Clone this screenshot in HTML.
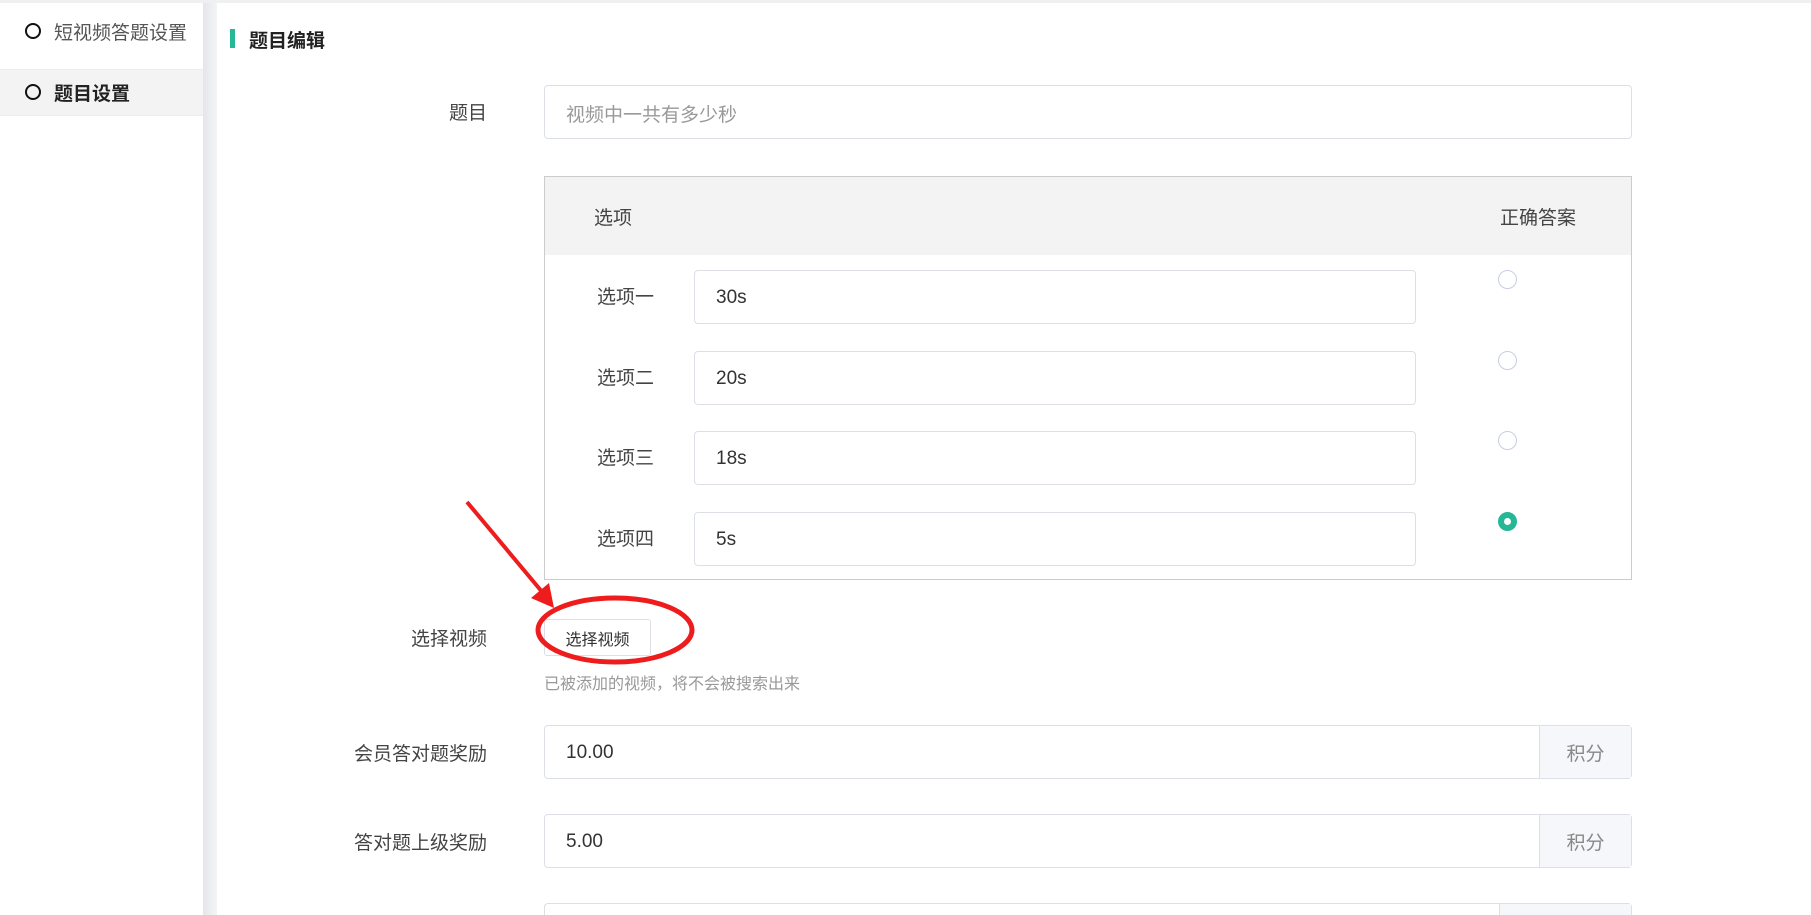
<!DOCTYPE html>
<html><head><meta charset="utf-8"><style>
*{box-sizing:border-box;margin:0;padding:0}
html,body{width:1811px;height:915px;overflow:hidden}
body{background:#fff;font-family:"Liberation Sans","Noto Sans CJK SC",sans-serif;color:#333;position:relative}
.a{position:absolute}
.topline{left:0;top:0;width:1811px;height:3px;background:#f0f0f0}
.gap{left:203px;top:3px;width:14px;height:912px;background:linear-gradient(90deg,#e4e6ea,#f3f4f6)}
.circ{width:16px;height:16px;border:2.5px solid #111;border-radius:50%}
.lbl{font-size:19px;color:#444;text-align:right;width:300px;left:187px}
.inp{border:1px solid #dcdfe6;border-radius:4px;background:#fff;font-size:19px;color:#333;padding-left:21px;padding-top:2px;display:flex;align-items:center}
.radio{width:19px;height:19px;border:1px solid #c8cde0;border-radius:50%;left:1498px}
.addon{background:#f5f7fa;border-left:1px solid #dcdfe6;color:#888;font-size:19px;display:flex;align-items:center;justify-content:center;top:0;bottom:0;right:0;position:absolute;width:92px}
</style></head><body>
<div class="a topline"></div>
<div class="a" style="left:0;top:3px;width:203px;height:912px;background:#fff;border-top-right-radius:18px"></div>
<div class="a gap"></div>
<div class="a" style="left:0;top:69px;width:203px;height:47px;background:#f3f3f3;border-top:1px solid #ececec;border-bottom:1px solid #ececec"></div>
<div class="a circ" style="left:25px;top:23px"></div>
<div class="a" style="left:54px;top:18px;font-size:19px;color:#555">短视频答题设置</div>
<div class="a circ" style="left:25px;top:84px"></div>
<div class="a" style="left:54px;top:79px;font-size:19px;font-weight:bold;color:#222">题目设置</div>
<div class="a" style="left:230px;top:29px;width:5px;height:19px;background:#26b896"></div>
<div class="a" style="left:249px;top:26px;font-size:19px;font-weight:bold;color:#222">题目编辑</div>

<div class="a lbl" style="top:98px">题目</div>
<div class="a inp" style="left:544px;top:85px;width:1088px;height:54px;color:#999">视频中一共有多少秒</div>

<div class="a" style="left:544px;top:176px;width:1088px;height:404px;border:1px solid #ccc"></div>
<div class="a" style="left:545px;top:177px;width:1086px;height:78px;background:#f3f3f3"></div>
<div class="a" style="left:594px;top:203px;font-size:19px;color:#444">选项</div>
<div class="a" style="left:1500px;top:203px;font-size:19px;color:#444">正确答案</div>

<div class="a" style="left:597px;top:282px;font-size:19px;color:#444">选项一</div>
<div class="a inp" style="left:694px;top:270px;width:722px;height:54px">30s</div>
<div class="a radio" style="top:270px"></div>
<div class="a" style="left:597px;top:363px;font-size:19px;color:#444">选项二</div>
<div class="a inp" style="left:694px;top:351px;width:722px;height:54px">20s</div>
<div class="a radio" style="top:351px"></div>
<div class="a" style="left:597px;top:443px;font-size:19px;color:#444">选项三</div>
<div class="a inp" style="left:694px;top:431px;width:722px;height:54px">18s</div>
<div class="a radio" style="top:431px"></div>
<div class="a" style="left:597px;top:524px;font-size:19px;color:#444">选项四</div>
<div class="a inp" style="left:694px;top:512px;width:722px;height:54px">5s</div>
<div class="a radio" style="top:512px;border:6px solid #26b896"></div>

<div class="a lbl" style="top:624px">选择视频</div>
<div class="a" style="left:544px;top:619px;width:107px;height:37px;border:1px solid #dcdfe6;border-radius:3px;font-size:16px;color:#333;display:flex;align-items:center;justify-content:center">选择视频</div>
<div class="a" style="left:544px;top:670px;font-size:16px;color:#999">已被添加的视频，将不会被搜索出来</div>

<div class="a lbl" style="top:739px">会员答对题奖励</div>
<div class="a inp" style="left:544px;top:725px;width:1088px;height:54px">10.00<div class="addon">积分</div></div>
<div class="a lbl" style="top:828px">答对题上级奖励</div>
<div class="a inp" style="left:544px;top:814px;width:1088px;height:54px">5.00<div class="addon">积分</div></div>
<div class="a inp" style="left:544px;top:903px;width:1088px;height:12px;border-bottom:none;border-radius:4px 4px 0 0"><div class="addon" style="width:132px"></div></div>

<svg class="a" style="left:0;top:0" width="1811" height="915">
<ellipse cx="615" cy="630" rx="77" ry="32" fill="none" stroke="#ee1c1c" stroke-width="5"/>
<line x1="467" y1="502" x2="543" y2="593" stroke="#ee1c1c" stroke-width="4"/>
<polygon points="554,608 531,598 549,583" fill="#ee1c1c"/>
</svg>
</body></html>
